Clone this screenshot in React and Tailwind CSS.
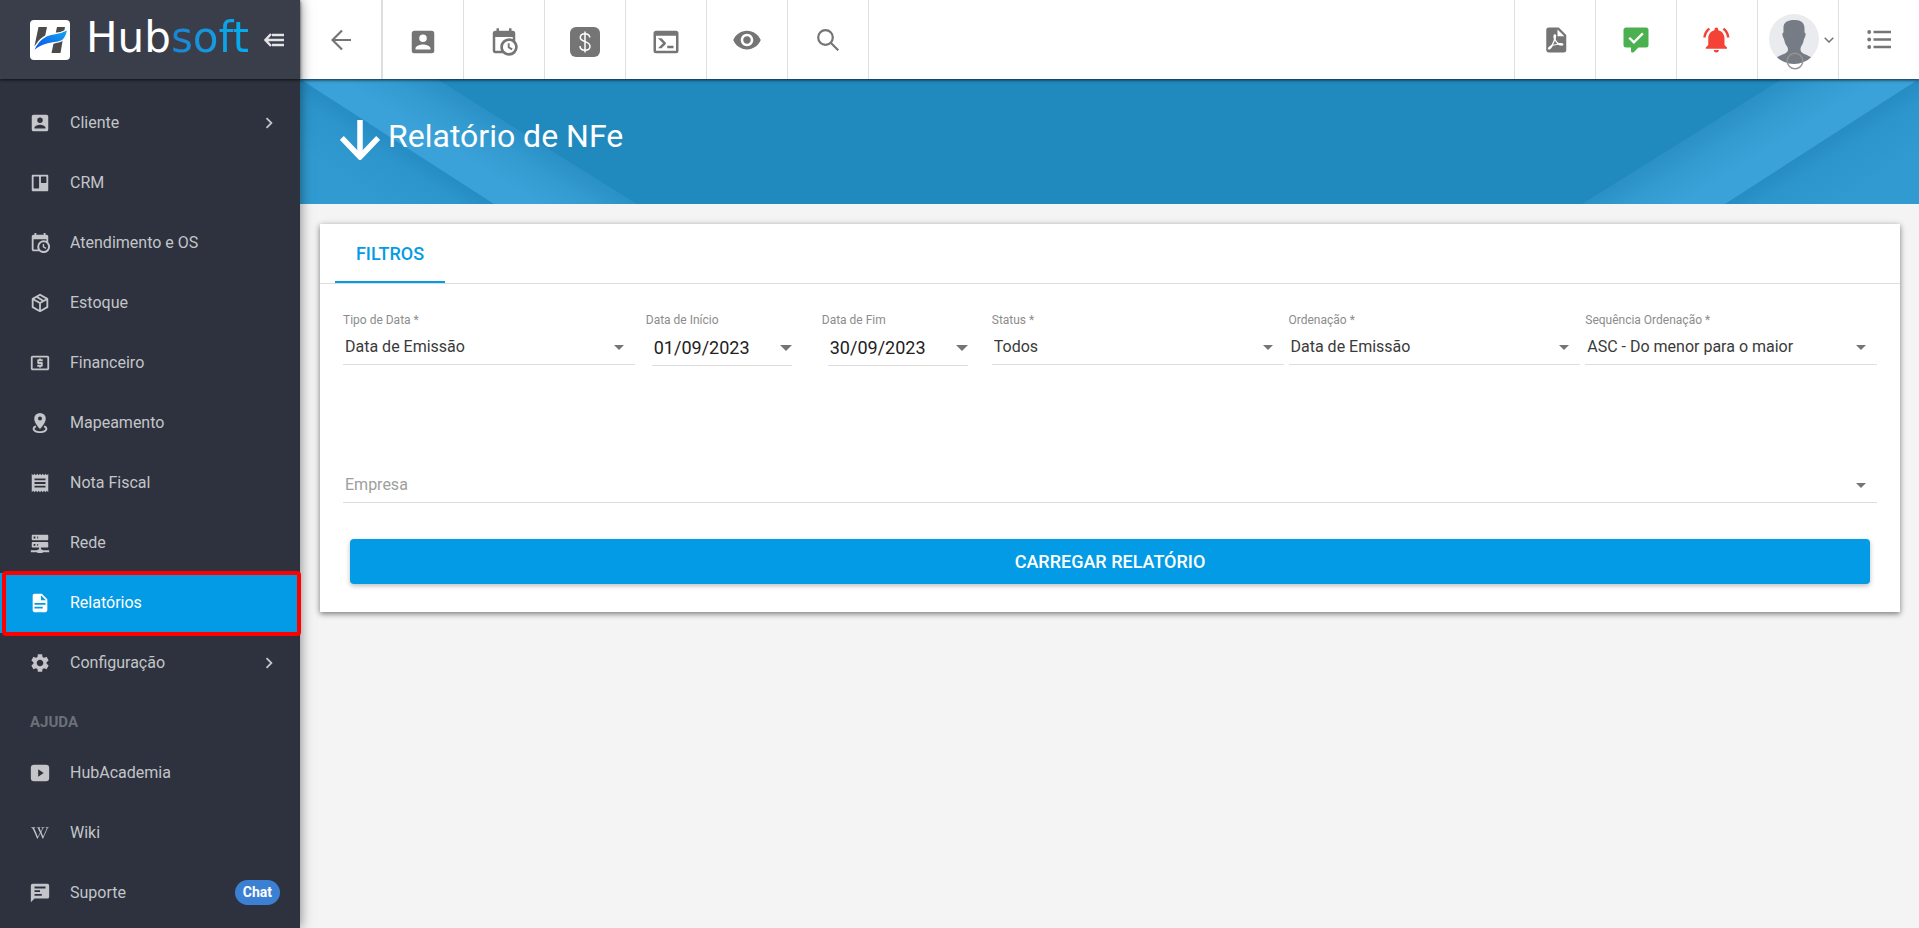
import React from "react";
import { MdLocalAtm, MdReceipt, MdSettings, MdChevronRight, MdVisibility } from "react-icons/md";
import { FaWikipediaW } from "react-icons/fa";

const PATHS = {
  account:
    "M6,17C6,15 10,13.9 12,13.9C14,13.9 18,15 18,17V18H6M15,9A3,3 0 0,1 12,12A3,3 0 0,1 9,9A3,3 0 0,1 12,6A3,3 0 0,1 15,9M3,5V19A2,2 0 0,0 5,21H19A2,2 0 0,0 21,19V5A2,2 0 0,0 19,3H5C3.89,3 3,3.9 3,5Z",
  board:
    "M4,3H20A1,1 0 0,1 21,4V20A1,1 0 0,1 20,21H4A1,1 0 0,1 3,20V4A1,1 0 0,1 4,3M5.5,5A0.5,0.5 0 0,0 5,5.5V17.5A0.5,0.5 0 0,0 5.5,18H10.5A0.5,0.5 0 0,0 11,17.5V5.5A0.5,0.5 0 0,0 10.5,5H5.5M13.5,5A0.5,0.5 0 0,0 13,5.5V11.5A0.5,0.5 0 0,0 13.5,12H18.5A0.5,0.5 0 0,0 19,11.5V5.5A0.5,0.5 0 0,0 18.5,5H13.5Z",
  calendarClock:
    "M15,13H16.5V15.82L18.94,17.23L18.19,18.53L15,16.69V13M19,8H5V19H9.67C9.24,18.09 9,17.07 9,16A7,7 0 0,1 16,9C17.07,9 18.09,9.24 19,9.67V8M5,21C3.89,21 3,20.1 3,19V5C3,3.89 3.89,3 5,3H6V1H8V3H16V1H18V3H19A2,2 0 0,1 21,5V11.1C22.24,12.36 23,14.09 23,16A7,7 0 0,1 16,23C14.09,23 12.36,22.24 11.1,21H5M16,11.15A4.85,4.85 0 0,0 11.15,16C11.15,18.68 13.32,20.85 16,20.85A4.85,4.85 0 0,0 20.85,16C20.85,13.32 18.68,11.15 16,11.15Z",
  box: "M21,16.5C21,16.88 20.79,17.21 20.47,17.38L12.57,21.82C12.41,21.94 12.21,22 12,22C11.79,22 11.59,21.94 11.43,21.82L3.53,17.38C3.21,17.21 3,16.88 3,16.5V7.5C3,7.12 3.21,6.79 3.53,6.62L11.43,2.18C11.59,2.06 11.79,2 12,2C12.21,2 12.41,2.06 12.57,2.18L20.47,6.62C20.79,6.79 21,7.12 21,7.5V16.5M12,4.15L10.11,5.22L16,8.61L17.96,7.5L12,4.15M6.04,7.5L12,10.85L13.96,9.75L8.08,6.35L6.04,7.5M5,15.91L11,19.29V12.58L5,9.21V15.91M19,15.91V9.21L13,12.58V19.29L19,15.91Z",
  pin: "M12,1A6.3,6.3 0 0,0 5.7,7.3C5.7,12 12,18.5 12,18.5C12,18.5 18.3,12 18.3,7.3A6.3,6.3 0 0,0 12,1M12,5A2.2,2.2 0 1,1 12,9.4A2.2,2.2 0 1,1 12,5M7,14.8C5.2,15.6 4,16.8 4,18.2C4,20.9 7.6,23 12,23C16.4,23 20,20.9 20,18.2C20,16.8 18.8,15.6 17,14.8L15.9,16.5C17.2,17 18,17.7 18,18.3C18,19.6 15.3,21 12,21C8.7,21 6,19.6 6,18.3C6,17.7 6.8,17 8.1,16.5Z",
  server:
    "M13,19H14A1,1 0 0,1 15,20H22V22H15A1,1 0 0,1 14,23H10A1,1 0 0,1 9,22H2V20H9A1,1 0 0,1 10,19H11V17H4A1,1 0 0,1 3,16V12A1,1 0 0,1 4,11H20A1,1 0 0,1 21,12V16A1,1 0 0,1 20,17H13V19M4,3H20A1,1 0 0,1 21,4V8A1,1 0 0,1 20,9H4A1,1 0 0,1 3,8V4A1,1 0 0,1 4,3M9,7H10V5H9V7M9,15H10V13H9V15M5,5V7H7V5H5M5,13V15H7V13H5Z",
  document:
    "M13,9H18.5L13,3.5V9M6,2H14L20,8V20A2,2 0 0,1 18,22H6C4.89,22 4,21.1 4,20V4C4,2.89 4.89,2 6,2M15,18V16H6V18H15M18,14V12H6V14H18Z",
  video:
    "M10,16V8L16,12L10,16M5.5,3H18.5A3.5,3.5 0 0,1 22,6.5V17.5A3.5,3.5 0 0,1 18.5,21H5.5A3.5,3.5 0 0,1 2,17.5V6.5A3.5,3.5 0 0,1 5.5,3Z",
  message:
    "M4,2H20A2,2 0 0,1 22,4V16A2,2 0 0,1 20,18H6L2,22V4A2,2 0 0,1 4,2M6,5V7H18V5H6M6,9V11H12V9H6M6,13V15H14V13H6Z",
  console:
    "M20,19V7H4V19H20M20,3A2,2 0 0,1 22,5V19A2,2 0 0,1 20,21H4A2,2 0 0,1 2,19V5C2,3.89 2.9,3 4,3H20M13,17V15H18V17H13M9.58,13L5.57,9H8.4L11.7,12.3C12.09,12.69 12.09,13.33 11.7,13.72L8.42,17H5.59L9.58,13Z",
  pdf: "M14,9H19.5L14,3.5V9M7,2H15L21,8V20A2,2 0 0,1 19,22H7C5.89,22 5,21.1 5,20V4A2,2 0 0,1 7,2M11.93,12.44C12.34,13.34 12.86,14.08 13.46,14.59L13.87,14.91C13,15.07 11.8,15.35 10.53,15.84L10.42,15.88L10.92,14.84C11.37,13.97 11.7,13.18 11.93,12.44M18.41,16.25C18.59,16.07 18.68,15.84 18.69,15.59C18.72,15.39 18.67,15.2 18.57,15.04C18.28,14.57 17.53,14.35 16.29,14.35L15,14.42L14.13,13.84C13.5,13.32 12.93,12.41 12.53,11.28L12.57,11.14C12.9,9.81 13.21,8.2 12.55,7.54C12.39,7.38 12.17,7.3 11.94,7.3H11.7C11.33,7.3 11,7.69 10.91,8.07C10.54,9.4 10.76,10.13 11.13,11.34C10.88,12.23 10.56,13.25 10.05,14.28L9.09,16.08L8.2,16.57C7,17.32 6.43,18.16 6.32,18.69C6.28,18.88 6.3,19.05 6.37,19.23L6.4,19.28L6.88,19.59L7.32,19.7C8.13,19.7 9.05,18.75 10.29,16.63L10.47,16.56C11.5,16.23 12.78,16 14.5,15.81C15.53,16.32 16.74,16.55 17.5,16.55C17.94,16.55 18.24,16.44 18.41,16.25Z",
  bell: "M11.5,22C11.64,22 11.77,22 11.9,21.96C12.55,21.82 13.09,21.38 13.34,20.78C13.44,20.54 13.5,20.27 13.5,20H9.5A2,2 0 0,0 11.5,22M18,10.5C18,7.43 15.86,4.86 13,4.18V3.5A1.5,1.5 0 0,0 11.5,2A1.5,1.5 0 0,0 10,3.5V4.18C7.13,4.86 5,7.43 5,10.5V16L3,18V19H20V18L18,16M19.97,10H21.97C21.82,6.79 20.24,3.97 17.85,2.15L16.42,3.58C18.46,5 19.82,7.35 19.97,10M6.58,3.58L5.15,2.15C2.76,3.97 1.18,6.79 1,10H3C3.18,7.35 4.54,5 6.58,3.58Z",
};

function Glyph({ name, className }) {
  return (
    <svg viewBox="0 0 24 24" fill="currentColor" fillRule="evenodd" aria-hidden="true" className={className}>
      <path d={PATHS[name]} />
    </svg>
  );
}

function LogoMark() {
  return (
    <svg viewBox="0 0 40 40" aria-hidden="true" className="size-10 shrink-0">
      <defs>
        <linearGradient id="swoosh" x1="0" y1="1" x2="1" y2="0">
          <stop offset="0" stopColor="#0a4be8" />
          <stop offset="0.5" stopColor="#0f78ee" />
          <stop offset="1" stopColor="#12a9ea" />
        </linearGradient>
      </defs>
      <rect width="40" height="40" rx="4" fill="#fff" />
      <path d="M8.5 7H17L13 26H4.5Z M27 7H35L30.5 33H21.5Z" fill="#4b4b4b" />
      <path
        d="M2.5 33C7 20 15 14.500 25 13.500C30 13 34 11.500 37.800 9.500C37 14 35.500 18 32.500 20.500C27 24 12 21.500 2.500 33Z"
        fill="url(#swoosh)"
        stroke="#fff"
        strokeWidth="1.400"
      />
    </svg>
  );
}

const NAV = [
  { label: "Cliente", icon: "account", more: true },
  { label: "CRM", icon: "board" },
  { label: "Atendimento e OS", icon: "calendarClock" },
  { label: "Estoque", icon: "box" },
  { label: "Financeiro", Icon: MdLocalAtm },
  { label: "Mapeamento", icon: "pin" },
  { label: "Nota Fiscal", Icon: MdReceipt },
  { label: "Rede", icon: "server" },
  { label: "Relatórios", icon: "document", active: true },
  { label: "Configuração", Icon: MdSettings, more: true },
];

const HELP = [
  { label: "HubAcademia", icon: "video" },
  { label: "Wiki", Icon: FaWikipediaW, small: true },
  { label: "Suporte", icon: "message", badge: "Chat" },
];

function NavItem({ label, icon, Icon, more, active, badge, small }) {
  return (
    <li className="relative">
      <a
        href="#"
        aria-current={active ? "page" : undefined}
        className={
          active
            ? "flex h-[60px] items-center bg-[#039be5] pr-5 pl-[29px] text-white"
            : "flex h-[60px] items-center pr-5 pl-[29px] text-[#c3c5c9]"
        }
      >
        <span className="flex w-[22px] shrink-0 justify-center">
          {Icon ? (
            <Icon className={small ? "size-[18px]" : "size-[22px]"} aria-hidden="true" />
          ) : (
            <Glyph name={icon} className="size-[22px]" />
          )}
        </span>
        <span className="ml-[19px] flex-1 pb-px text-base">{label}</span>
        {more && <MdChevronRight className="size-[22px]" aria-hidden="true" />}
        {badge && (
          <span className="mb-0.5 rounded-full bg-[#3c80d4] px-2 text-sm leading-[25px] font-bold text-white">{badge}</span>
        )}
      </a>
      {active && (
        <span className="pointer-events-none absolute -top-0.5 -right-px -bottom-[3px] left-0.5 rounded-sm border-4 border-[#fe0000]" />
      )}
    </li>
  );
}

function Sidebar() {
  return (
    <aside className="z-20 flex w-[300px] shrink-0 flex-col bg-[#2d323e] shadow-[0_0_12px_rgba(0,0,0,0.5)]">
      <div className="z-10 flex h-[79px] items-center bg-[#3a3e4a] pl-[30px] shadow-[0_1px_3px_rgba(0,0,0,0.7)]">
        <LogoMark />
        <span className="ml-4 pb-1 font-['DejaVu_Sans'] text-[42px] leading-10 text-white">
          Hub<span className="bg-linear-to-r from-[#1c83d0] to-[#00b0f0] bg-clip-text text-transparent">soft</span>
        </span>
        <button type="button" aria-label="Recolher menu" className="mr-4 ml-auto shrink-0 text-[#e3e4e6]">
          <svg viewBox="0 0 20 14" fill="none" stroke="currentColor" strokeWidth="2.400" className="h-3.5 w-5" aria-hidden="true">
            <path d="M8 2H20M2 7H20M8 12H20M7 1L1.500 7L7 13" />
          </svg>
        </button>
      </div>
      <nav aria-label="Menu principal" className="pt-3.5">
        <ul>
          {NAV.map((item) => (
            <NavItem key={item.label} {...item} />
          ))}
        </ul>
        <h2 className="px-[30px] pt-[17px] pb-[9px] text-[15px] leading-6 font-bold text-[#6c7079]">AJUDA</h2>
        <ul>
          {HELP.map((item) => (
            <NavItem key={item.label} {...item} />
          ))}
        </ul>
      </nav>
    </aside>
  );
}

function BarButton({ label, children, className = "border-r" }) {
  return (
    <button
      type="button"
      aria-label={label}
      className={`${className} flex w-[81px] shrink-0 items-center justify-center border-[#dfdfdf] text-[#757575]`}
    >
      {children}
    </button>
  );
}

function TopBar() {
  return (
    <header className="z-10 flex h-[79px] bg-white shadow-[0_1px_3px_rgba(0,0,0,0.75)]">
      <BarButton label="Voltar" className="box-content border-r-2">
        <svg viewBox="0 0 20 22" fill="none" stroke="currentColor" strokeWidth="2.200" className="h-[22px] w-5" aria-hidden="true">
          <path d="M20 11H2M11 1.500L1.500 11L11 20.500" />
        </svg>
      </BarButton>
      <BarButton label="Clientes">
        <Glyph name="account" className="mt-1 size-[30px]" />
      </BarButton>
      <BarButton label="Agenda">
        <Glyph name="calendarClock" className="mt-1 size-[30px]" />
      </BarButton>
      <BarButton label="Financeiro">
        <span className="mt-1 flex size-[30px] items-center justify-center rounded-md bg-[#757575]">
          <svg viewBox="0 0 12 22" fill="none" stroke="#fff" strokeWidth="1.500" className="h-[22px] w-3" aria-hidden="true">
            <path d="M6 0.500V21.500M10.800 6.500C10.800 4.300 9 2.800 6 2.800C3.200 2.800 1.300 4.300 1.300 6.600C1.300 11.500 11 9.700 11 15.200C11 17.600 9 19.200 6 19.200C3 19.200 1 17.600 1 15" />
          </svg>
        </span>
      </BarButton>
      <BarButton label="Console">
        <Glyph name="console" className="mt-1 size-[30px]" />
      </BarButton>
      <BarButton label="Visualizar">
        <MdVisibility className="size-[30px]" aria-hidden="true" />
      </BarButton>
      <BarButton label="Buscar">
        <svg viewBox="0 0 22 22" fill="none" stroke="currentColor" strokeWidth="2.200" className="size-[22px]" aria-hidden="true">
          <circle cx="8.500" cy="8.500" r="7.300" />
          <path d="M13.500 13.500L21.300 21.300" />
        </svg>
      </BarButton>
      <div className="ml-auto flex">
        <BarButton label="Exportar PDF" className="border-l">
          <Glyph name="pdf" className="size-[30px]" />
        </BarButton>
        <BarButton label="Mensagens" className="border-l">
          <svg viewBox="0 0 24 24" className="size-[30px]" aria-hidden="true">
            <path
              d="M9 22A1 1 0 0 1 8 21V18H4A2 2 0 0 1 2 16V4C2 2.890 2.900 2 4 2H20A2 2 0 0 1 22 4V16A2 2 0 0 1 20 18H13.900L10.200 21.700C10 21.900 9.750 22 9.500 22Z"
              fill="#4caf50"
            />
            <path d="M6.600 10.200L10.300 13.900L17.500 6.700" fill="none" stroke="#fff" strokeWidth="1.900" />
          </svg>
        </BarButton>
        <BarButton label="Notificações" className="border-l">
          <Glyph name="bell" className="size-[30px] text-[#f44336]" />
        </BarButton>
        <button
          type="button"
          aria-label="Perfil"
          className="flex w-[81px] shrink-0 items-center border-l border-[#dfdfdf] pl-[11px] text-[#757575]"
        >
          <svg viewBox="0 0 50 56" className="mt-1 h-14 w-[50px]" aria-hidden="true">
            <defs>
              <clipPath id="avatar">
                <circle cx="25" cy="25" r="25" />
              </clipPath>
            </defs>
            <circle cx="25" cy="25" r="25" fill="#e9ebef" />
            <path
              clipPath="url(#avatar)"
              fill="#757c86"
              d="M25 6C31 5.500 35.500 8.500 35.500 14V18.500C37 18.500 37 21.500 35.300 24.500C34.500 26 34.500 28.500 33 31C32 32.500 31.500 33 31.500 36C32 39.500 37 40.500 42 43V50H8V43C13 40.500 18.500 39.500 19 36C19 33 18 32.500 17 31C15.500 28.500 15.500 26 14.700 24.500C13 21.500 13 18.500 14.500 18.500V13C14.500 8.500 19 6 25 6Z"
            />
            <path d="M19 50A7.800 7.800 0 0 0 33 50Z" fill="#fff" />
            <circle cx="26" cy="47" r="7.800" fill="none" stroke="#989390" strokeWidth="1.500" />
          </svg>
          <svg viewBox="0 0 10 6" fill="none" stroke="currentColor" strokeWidth="1.500" className="ml-[5px] h-1.5 w-2.5" aria-hidden="true">
            <path d="M0.700 0.700L5 5L9.300 0.700" />
          </svg>
        </button>
        <BarButton label="Opções" className="border-l">
          <svg viewBox="0 0 24 19" fill="currentColor" className="h-[19px] w-6" aria-hidden="true">
            <circle cx="2.200" cy="2" r="1.900" />
            <circle cx="2.200" cy="9.500" r="1.900" />
            <circle cx="2.200" cy="17" r="1.900" />
            <path d="M6.500 0.800H24V3.200H6.500ZM6.500 8.300H24V10.700H6.500ZM6.500 15.800H24V18.200H6.500Z" />
          </svg>
        </BarButton>
      </div>
    </header>
  );
}

// One corner of the banner artwork: a diagonal band with soft folds on both edges.
function BannerCorner({ id, className }) {
  return (
    <svg viewBox="0 0 340 125" className={className} aria-hidden="true">
      <defs>
        <linearGradient id={`${id}-fold`} gradientUnits="userSpaceOnUse" x1="97" y1="62" x2="63" y2="115">
          <stop offset="0" stopColor="#268cc3" />
          <stop offset="0.300" stopColor="#2c95cc" />
          <stop offset="1" stopColor="#319bd1" />
        </linearGradient>
        <linearGradient id={`${id}-band`} gradientUnits="userSpaceOnUse" x1="236" y1="62" x2="208" y2="107">
          <stop offset="0" stopColor="#2a90c6" />
          <stop offset="0.450" stopColor="#339bd0" />
          <stop offset="1" stopColor="#3aa2d8" />
        </linearGradient>
      </defs>
      <path d="M0 0H137L337 125H0Z" fill={`url(#${id}-band)`} />
      <path d="M0 0L194 125H0Z" fill={`url(#${id}-fold)`} />
    </svg>
  );
}

function Banner() {
  return (
    <div className="grid bg-[#2089be]">
      <div className="col-start-1 row-start-1 flex justify-between">
        <BannerCorner id="start" className="h-[125px] w-[340px]" />
        <BannerCorner id="end" className="h-[125px] w-[340px] -scale-x-100" />
      </div>
      <div className="z-[1] col-start-1 row-start-1 flex items-center pb-3 pl-10 text-white">
        <svg viewBox="0 0 40 40" fill="none" stroke="currentColor" className="mt-2 size-10" aria-hidden="true">
          <path d="M20 0V36" strokeWidth="5.500" />
          <path d="M1.800 18L20 37L38.200 18" strokeWidth="5.500" />
        </svg>
        <h1 className="ml-2 text-[32px] leading-10">Relatório de NFe</h1>
      </div>
    </div>
  );
}

function Caret({ className }) {
  return (
    <svg viewBox="0 0 10 5" fill="currentColor" className={className} aria-hidden="true">
      <path d="M0 0H10L5 5Z" />
    </svg>
  );
}

function SelectField({ id, label, value, className }) {
  return (
    <div className={className}>
      <label htmlFor={id} className="block text-xs leading-4 text-[#8c8c8c]">
        {label}
      </label>
      <div className="relative mt-1 flex h-[33px] border-b border-[#dedede]">
        <select id={id} className="w-full appearance-none bg-transparent pb-0.5 pl-0.5 text-base text-[#3a3a3a]">
          <option>{value}</option>
        </select>
        <Caret className="pointer-events-none absolute top-[13px] right-[11px] h-[5px] w-2.5 text-[#757575]" />
      </div>
    </div>
  );
}

function DateField({ id, label, value, className }) {
  return (
    <div className={className}>
      <label htmlFor={id} className="block text-xs leading-4 text-[#8c8c8c]">
        {label}
      </label>
      <div className="mt-1 ml-1.5 flex h-[34px] items-center border-b border-[#dedede] pb-0.5">
        <input
          id={id}
          type="text"
          defaultValue={value}
          className="w-full min-w-0 flex-1 pl-0.5 text-lg leading-6 text-[#212121] outline-none"
        />
        <button type="button" aria-label={`Abrir calendário: ${label}`} className="text-[#757575]">
          <Caret className="h-1.5 w-3" />
        </button>
      </div>
    </div>
  );
}

function FilterCard() {
  return (
    <section className="my-5 mr-[19px] ml-5 bg-white shadow-[0_2px_5px_rgba(0,0,0,0.4),0_1px_8px_rgba(0,0,0,0.15)]">
      <div role="tablist" className="flex h-[60px] border-b border-[#dedede] pl-[15px]">
        <button
          type="button"
          role="tab"
          aria-selected="true"
          className="w-[110px] border-b-2 border-[#039be5] pt-0.5 text-lg font-medium text-[#039be5]"
        >
          FILTROS
        </button>
      </div>
      <form className="px-[23px] pt-7 pb-7" onSubmit={(e) => e.preventDefault()}>
        <div className="flex">
          <SelectField id="tipo-data" label="Tipo de Data *" value="Data de Emissão" className="flex-1" />
          <DateField id="data-inicio" label="Data de Início" value="01/09/2023" className="mr-[30px] ml-[11px] w-[146px]" />
          <DateField id="data-fim" label="Data de Fim" value="30/09/2023" className="mr-6 w-[146px]" />
          <SelectField id="status" label="Status *" value="Todos" className="flex-1" />
          <SelectField id="ordenacao" label="Ordenação *" value="Data de Emissão" className="ml-[5px] flex-1" />
          <SelectField
            id="sequencia"
            label="Sequência Ordenação *"
            value="ASC - Do menor para o maior"
            className="ml-[5px] flex-1"
          />
        </div>
        <div className="relative mt-[104px] flex h-[33px] border-b border-[#dedede]">
          <select
            aria-label="Empresa"
            defaultValue=""
            className="w-full appearance-none bg-transparent pb-0.5 pl-0.5 text-base text-[#9e9e9e]"
          >
            <option value="">Empresa</option>
          </select>
          <Caret className="pointer-events-none absolute top-[13px] right-[11px] h-[5px] w-2.5 text-[#757575]" />
        </div>
        <div className="px-[7px] pt-9">
          <button
            type="submit"
            className="h-[45px] w-full rounded bg-[#039be5] text-lg font-medium text-white shadow-[0_2px_5px_rgba(0,0,0,0.26)]"
          >
            CARREGAR RELATÓRIO
          </button>
        </div>
      </form>
    </section>
  );
}

export default function App() {
  return (
    <div className="flex min-h-screen bg-[#f4f4f4] font-['Roboto',sans-serif]">
      <Sidebar />
      <div className="flex min-w-0 flex-1 flex-col">
        <TopBar />
        <Banner />
        <main>
          <FilterCard />
        </main>
      </div>
    </div>
  );
}
